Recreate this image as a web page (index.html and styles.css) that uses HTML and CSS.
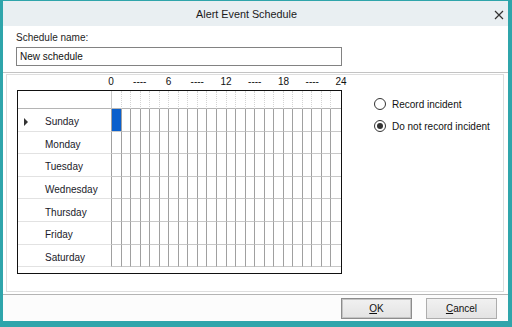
FILE: index.html
```html
<!DOCTYPE html>
<html>
<head>
<meta charset="utf-8">
<link rel="stylesheet" href="styles.css">
</head>
<body>
<div class="window">
  <div class="titlebar">
    <div class="title">Alert Event Schedule</div>
    <div class="close"><svg width="10" height="10" viewBox="0 0 10 10"><path d="M1 1L9 9M9 1L1 9" stroke="#333" stroke-width="1.2"/></svg></div>
  </div>
  <div class="name-section">
    <div class="label">Schedule name:</div>
    <div class="input">New schedule</div>
  </div>
  <div class="main">
    <div class="panel">
      <div class="left">
        <div class="hours-labels">
          <span>0</span><span>----</span><span>6</span><span>----</span><span>12</span><span>----</span><span>18</span><span>----</span><span>24</span>
        </div>
        <div class="gridbox">
          <div class="grid">
            <div class="corner"></div>
            <div class="hh"></div><div class="hh"></div><div class="hh"></div><div class="hh"></div><div class="hh"></div><div class="hh"></div><div class="hh"></div><div class="hh"></div><div class="hh"></div><div class="hh"></div><div class="hh"></div><div class="hh"></div><div class="hh"></div><div class="hh"></div><div class="hh"></div><div class="hh"></div><div class="hh"></div><div class="hh"></div><div class="hh"></div><div class="hh"></div><div class="hh"></div><div class="hh"></div><div class="hh"></div><div class="hh"></div>

            <div class="rh"><span class="ptr"><span class="tri"></span></span>Sunday</div>
            <div class="c sel"></div><div class="c"></div><div class="c"></div><div class="c"></div><div class="c"></div><div class="c"></div><div class="c"></div><div class="c"></div><div class="c"></div><div class="c"></div><div class="c"></div><div class="c"></div><div class="c"></div><div class="c"></div><div class="c"></div><div class="c"></div><div class="c"></div><div class="c"></div><div class="c"></div><div class="c"></div><div class="c"></div><div class="c"></div><div class="c"></div><div class="c"></div>

            <div class="rh"><span class="ptr"></span>Monday</div>
            <div class="c"></div><div class="c"></div><div class="c"></div><div class="c"></div><div class="c"></div><div class="c"></div><div class="c"></div><div class="c"></div><div class="c"></div><div class="c"></div><div class="c"></div><div class="c"></div><div class="c"></div><div class="c"></div><div class="c"></div><div class="c"></div><div class="c"></div><div class="c"></div><div class="c"></div><div class="c"></div><div class="c"></div><div class="c"></div><div class="c"></div><div class="c"></div>

            <div class="rh"><span class="ptr"></span>Tuesday</div>
            <div class="c"></div><div class="c"></div><div class="c"></div><div class="c"></div><div class="c"></div><div class="c"></div><div class="c"></div><div class="c"></div><div class="c"></div><div class="c"></div><div class="c"></div><div class="c"></div><div class="c"></div><div class="c"></div><div class="c"></div><div class="c"></div><div class="c"></div><div class="c"></div><div class="c"></div><div class="c"></div><div class="c"></div><div class="c"></div><div class="c"></div><div class="c"></div>

            <div class="rh"><span class="ptr"></span>Wednesday</div>
            <div class="c"></div><div class="c"></div><div class="c"></div><div class="c"></div><div class="c"></div><div class="c"></div><div class="c"></div><div class="c"></div><div class="c"></div><div class="c"></div><div class="c"></div><div class="c"></div><div class="c"></div><div class="c"></div><div class="c"></div><div class="c"></div><div class="c"></div><div class="c"></div><div class="c"></div><div class="c"></div><div class="c"></div><div class="c"></div><div class="c"></div><div class="c"></div>

            <div class="rh"><span class="ptr"></span>Thursday</div>
            <div class="c"></div><div class="c"></div><div class="c"></div><div class="c"></div><div class="c"></div><div class="c"></div><div class="c"></div><div class="c"></div><div class="c"></div><div class="c"></div><div class="c"></div><div class="c"></div><div class="c"></div><div class="c"></div><div class="c"></div><div class="c"></div><div class="c"></div><div class="c"></div><div class="c"></div><div class="c"></div><div class="c"></div><div class="c"></div><div class="c"></div><div class="c"></div>

            <div class="rh"><span class="ptr"></span>Friday</div>
            <div class="c"></div><div class="c"></div><div class="c"></div><div class="c"></div><div class="c"></div><div class="c"></div><div class="c"></div><div class="c"></div><div class="c"></div><div class="c"></div><div class="c"></div><div class="c"></div><div class="c"></div><div class="c"></div><div class="c"></div><div class="c"></div><div class="c"></div><div class="c"></div><div class="c"></div><div class="c"></div><div class="c"></div><div class="c"></div><div class="c"></div><div class="c"></div>

            <div class="rh"><span class="ptr"></span>Saturday</div>
            <div class="c"></div><div class="c"></div><div class="c"></div><div class="c"></div><div class="c"></div><div class="c"></div><div class="c"></div><div class="c"></div><div class="c"></div><div class="c"></div><div class="c"></div><div class="c"></div><div class="c"></div><div class="c"></div><div class="c"></div><div class="c"></div><div class="c"></div><div class="c"></div><div class="c"></div><div class="c"></div><div class="c"></div><div class="c"></div><div class="c"></div><div class="c"></div>
          </div>
        </div>
      </div>
      <div class="radios">
        <div class="radio"><span class="circle"></span><span>Record incident</span></div>
        <div class="radio"><span class="circle checked"></span><span>Do not record incident</span></div>
      </div>
    </div>
  </div>
  <div class="footer">
    <div class="btn default"><span class="u">O</span>K</div>
    <div class="btn"><span class="u">C</span>ancel</div>
  </div>
</div>
</body>
</html>
```
FILE: styles.css
```css
html, body {
  margin: 0;
  padding: 0;
}
body {
  width: 512px;
  height: 327px;
  box-sizing: border-box;
  padding: 1px 4px 6px 3px;
  background: #2fa5ab;
  font-family: "Liberation Sans", Arial, sans-serif;
  font-size: 10px;
  color: #1e1e1e;
  overflow: hidden;
}
.window {
  height: 320px;
  display: flex;
  flex-direction: column;
  background: #ffffff;
}
.titlebar {
  height: 25px;
  flex: none;
  display: grid;
  grid-template-columns: 1fr 18px;
  align-items: center;
  background: #e9eff2;
}
.title {
  text-align: center;
  font-size: 10.8px;
  color: #1a1a1a;
  padding-top: 1px;
}
.close {
  display: flex;
  align-items: center;
  justify-content: center;
  height: 25px;
  padding-top: 2px;
  box-sizing: border-box;
}
.name-section {
  height: 46px;
  flex: none;
  box-sizing: content-box;
  border-bottom: 1px solid #c3c3c3;
  padding-left: 13px;
}
.label {
  padding-top: 6px;
  line-height: 12px;
  height: 12px;
}
.input {
  margin-top: 3px;
  width: 326px;
  height: 19px;
  box-sizing: border-box;
  border: 1px solid #828282;
  padding-left: 3px;
  line-height: 17px;
  color: #111;
}
.main {
  height: 221px;
  flex: none;
  padding: 1px 4px 0 3px;
  box-sizing: border-box;
}
.panel {
  height: 218px;
  box-sizing: border-box;
  border: 1px solid #dedede;
  display: flex;
  padding: 1px 0 0 10px;
}
.left {
  width: 325px;
  flex: none;
}
.hours-labels {
  display: grid;
  grid-template-columns: repeat(9, 28.75px);
  margin-left: 79.6px;
  width: 258.75px;
  height: 12px;
  line-height: 12px;
  color: #111;
}
.hours-labels span {
  text-align: center;
}
.gridbox {
  margin-top: 2px;
  width: 325px;
  height: 184px;
  box-sizing: border-box;
  border: 1px solid #111;
  background: #fff;
}
.grid {
  display: grid;
  grid-template-columns: 94px repeat(24, 1fr);
  grid-template-rows: 18px repeat(7, 22.6px);
}
.grid > div {
  box-sizing: border-box;
}
.corner {
  border-right: 1px solid #c8c8c8;
  border-bottom: 1px solid #b4b4b4;
}
.hh {
  border-right: 1px dotted #d4d4d4;
  border-bottom: 1px solid #b4b4b4;
}
.rh {
  display: flex;
  align-items: center;
  border-right: 1px solid #a0a0a0;
  border-bottom: 1px solid #e2e2e2;
  padding-top: 4px;
  color: #1a1a2a;
}
.ptr {
  width: 27px;
  flex: none;
  display: flex;
  padding-left: 6px;
  box-sizing: border-box;
}
.tri {
  width: 0;
  height: 0;
  border-left: 4px solid #333;
  border-top: 4px solid transparent;
  border-bottom: 4px solid transparent;
}
.c {
  border-right: 1px solid #a0a0a0;
  border-bottom: 1px solid #c8c8c8;
}
.c.sel {
  background: #0a5fcc;
}
.grid > div:nth-child(25n) {
  border-right: none;
}
.radios {
  padding: 17px 0 0 32px;
}
.radio {
  height: 22px;
  display: flex;
  align-items: center;
  color: #111;
}
.circle {
  width: 12px;
  height: 12px;
  box-sizing: border-box;
  border: 1px solid #333;
  border-radius: 50%;
  background: #fff;
  margin-right: 6px;
  display: flex;
  align-items: center;
  justify-content: center;
}
.circle.checked::after {
  content: "";
  width: 6px;
  height: 6px;
  border-radius: 50%;
  background: #333;
}
.footer {
  flex: 1;
  border-top: 1px solid #b4b4b4;
  display: flex;
  justify-content: flex-end;
  gap: 14px;
  padding: 3px 11px 0 0;
  background: #fcfcfc;
}
.btn {
  width: 71px;
  height: 21px;
  box-sizing: border-box;
  border: 1px solid #adadad;
  background: linear-gradient(#f1f1f1, #e3e3e3);
  display: flex;
  align-items: center;
  justify-content: center;
  color: #111;
}
.btn.default {
  border: 1px solid #8c8c8c;
  box-shadow: inset 0 0 0 1px #c4c4c4;
}
.u {
  text-decoration: underline;
}
```
